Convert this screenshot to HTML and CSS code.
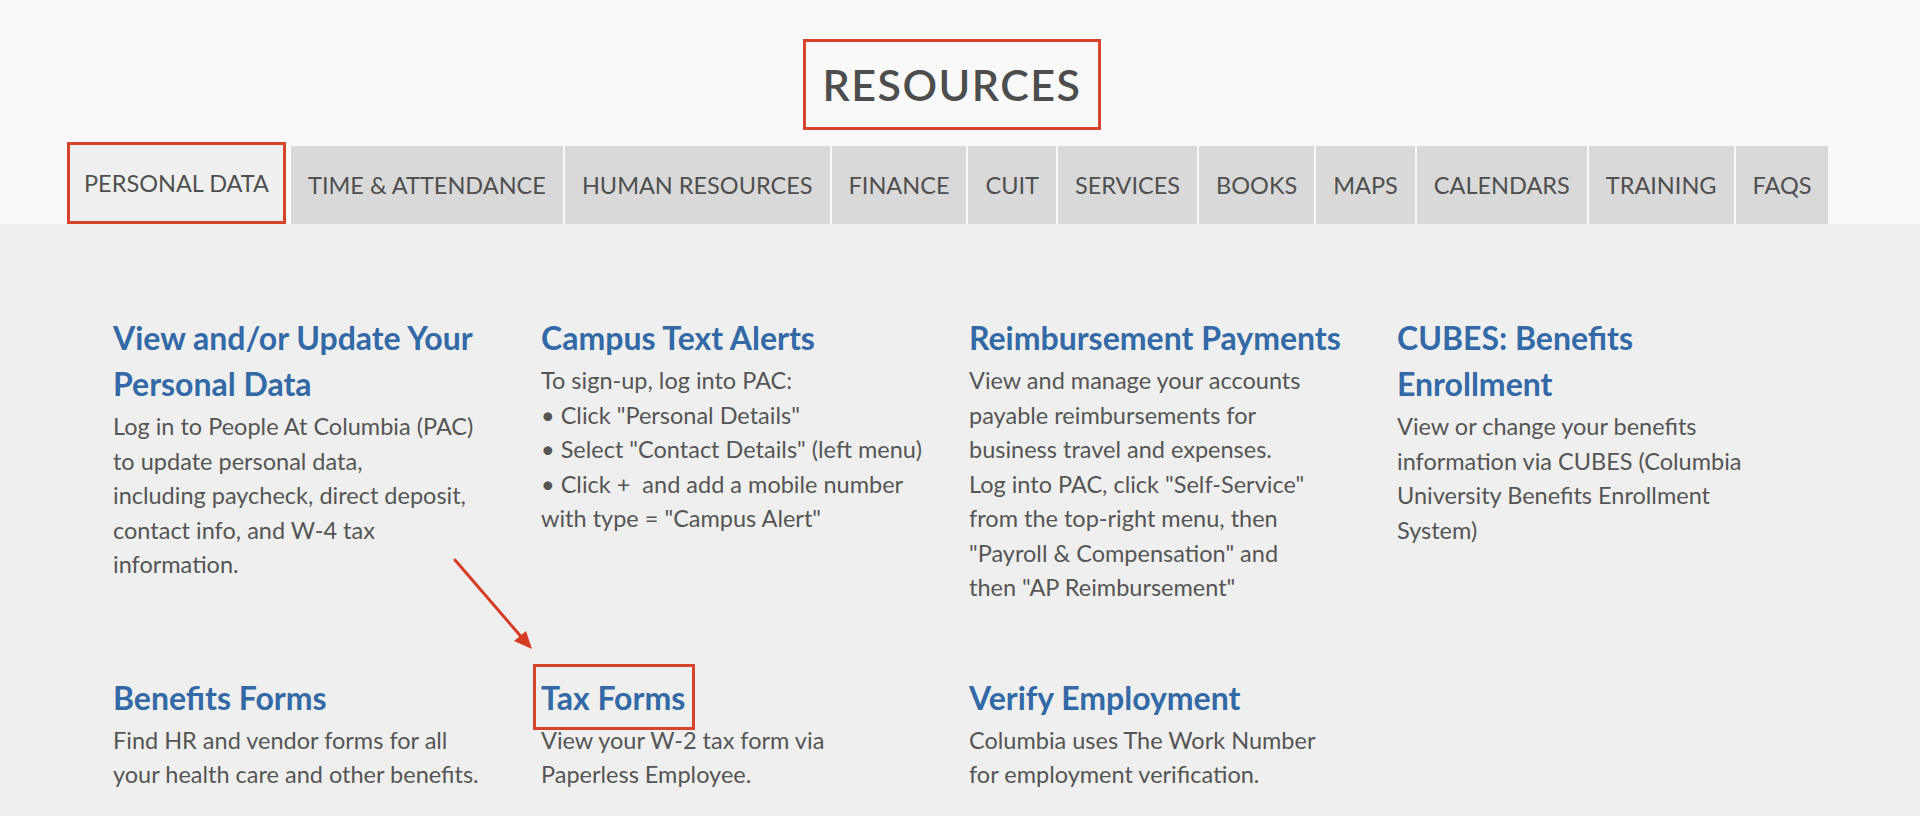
FILE: index.html
```html
<!DOCTYPE html>
<html lang="en">
<head>
<meta charset="utf-8">
<title>Resources</title>
<link rel="stylesheet" href="styles.css">
</head>
<body>
<header class="header">
  <div class="inner">
    <div class="title-row"><h1 class="title">RESOURCES</h1></div>
    <nav class="tabs">
      <a class="tab active">PERSONAL DATA</a>
      <a class="tab">TIME &amp; ATTENDANCE</a>
      <a class="tab">HUMAN RESOURCES</a>
      <a class="tab">FINANCE</a>
      <a class="tab">CUIT</a>
      <a class="tab">SERVICES</a>
      <a class="tab">BOOKS</a>
      <a class="tab">MAPS</a>
      <a class="tab">CALENDARS</a>
      <a class="tab">TRAINING</a>
      <a class="tab">FAQS</a>
    </nav>
  </div>
</header>
<main class="panel">
  <svg class="arrow" width="110" height="110" viewBox="0 0 110 110" aria-hidden="true">
    <line x1="15" y1="6" x2="84" y2="86" stroke="#d63b23" stroke-width="3" stroke-linecap="round"/>
    <polygon points="92,95 74,87 86,77" fill="#d63b23"/>
  </svg>
  <div class="inner">
    <div class="grid">
      <section class="item">
        <h3 class="item-title">View and/or Update Your<br>Personal Data</h3>
        <p class="item-text">Log in to People At Columbia (PAC)<br>to update personal data,<br>including paycheck, direct deposit,<br>contact info, and W-4 tax<br>information.</p>
      </section>
      <section class="item">
        <h3 class="item-title">Campus Text Alerts</h3>
        <p class="item-text">To sign-up, log into PAC:<br>• Click "Personal Details"<br>• Select "Contact Details" (left menu)<br>• Click +&nbsp; and add a mobile number<br>with type = "Campus Alert"</p>
      </section>
      <section class="item">
        <h3 class="item-title">Reimbursement Payments</h3>
        <p class="item-text">View and manage your accounts<br>payable reimbursements for<br>business travel and expenses.<br>Log into PAC, click "Self-Service"<br>from the top-right menu, then<br>"Payroll &amp; Compensation" and<br>then "AP Reimbursement"</p>
      </section>
      <section class="item">
        <h3 class="item-title">CUBES: Benefits<br>Enrollment</h3>
        <p class="item-text">View or change your benefits<br>information via CUBES (Columbia<br>University Benefits Enrollment<br>System)</p>
      </section>
      <section class="item">
        <h3 class="item-title">Benefits Forms</h3>
        <p class="item-text">Find HR and vendor forms for all<br>your health care and other benefits.</p>
      </section>
      <section class="item">
        <h3 class="item-title"><span class="marked">Tax Forms</span></h3>
        <p class="item-text">View your W-2 tax form via<br>Paperless Employee.</p>
      </section>
      <section class="item">
        <h3 class="item-title">Verify Employment</h3>
        <p class="item-text">Columbia uses The Work Number<br>for employment verification.</p>
      </section>
    </div>
  </div>
</main>
</body>
</html>
```

FILE: styles.css
```css
* { box-sizing: border-box; }

html, body {
  margin: 0;
  padding: 0;
}

body {
  background: #f9f9f9;
  font-family: "Lato", "Liberation Sans", sans-serif;
  color: #555555;
  overflow: hidden;
}

.inner {
  width: 1764px;
  margin-left: 67px;
}

.header {
  padding-top: 39px;
}

.title-row {
  display: flex;
  justify-content: center;
  padding-left: 6px;
}

.title {
  margin: 0;
  width: 298px;
  height: 91px;
  border: 3px solid #d8442b;
  display: flex;
  align-items: center;
  justify-content: center;
  font-size: 43px;
  font-weight: 600;
  letter-spacing: 1.5px;
  color: #4d4d4d;
}

.tabs {
  display: flex;
  align-items: flex-end;
  margin-top: 12px;
  gap: 2px;
}

.tab {
  height: 78px;
  display: flex;
  align-items: center;
  padding: 0 17px;
  background: #d9d9d9;
  color: #4f4f4f;
  font-size: 23.5px;
  white-space: nowrap;
  text-decoration: none;
}

.tab.active {
  height: 82px;
  background: #efefef;
  border: 3px solid #d8442b;
  padding: 0 14px;
  margin-right: 3px;
}

.panel {
  position: relative;
  background: #efefef;
  padding-top: 91px;
  min-height: 600px;
}

.arrow {
  position: absolute;
  left: 440px;
  top: 330px;
}

.grid {
  display: grid;
  grid-template-columns: repeat(4, 420px);
  column-gap: 8px;
  row-gap: 70px;
  padding-left: 46px;
}

.item-title {
  margin: 0 0 2px;
  font-size: 32px;
  line-height: 46px;
  font-weight: 700;
  color: #3269a6;
  white-space: nowrap;
}

.item-text {
  margin: 0;
  font-size: 23.5px;
  line-height: 34.5px;
  color: #555555;
  white-space: nowrap;
}

.marked {
  position: relative;
  display: inline-block;
}

.marked::after {
  content: "";
  position: absolute;
  left: -8px;
  top: -11px;
  width: 156px;
  height: 60px;
  border: 3px solid #d8442b;
}
```
